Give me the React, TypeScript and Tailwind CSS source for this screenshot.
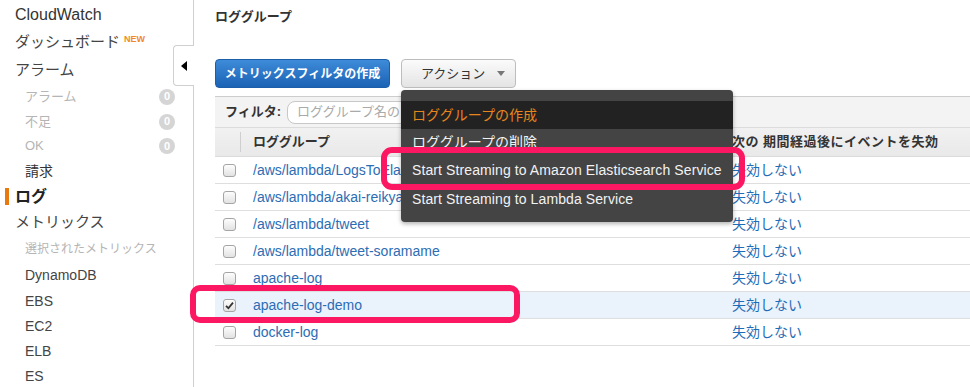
import React from 'react';

const logGroups = [
  '/aws/lambda/LogsToElasticsearch',
  '/aws/lambda/akai-reikyaku',
  '/aws/lambda/tweet',
  '/aws/lambda/tweet-soramame',
  'apache-log',
  'apache-log-demo',
  'docker-log',
];

function Badge() {
  return (
    <span className="w-[16px] h-[16px] rounded-full bg-[#d5d5d5] text-white text-[11px] font-bold flex items-center justify-center">
      0
    </span>
  );
}

function SubItem({ label, badge, h = 'h-[25px]' }: { label: string; badge?: boolean; h?: string }) {
  return (
    <div className={`${h} flex items-center justify-between pl-[25px] pr-[18px] text-[13px] text-[#b5b5b5]`}>
      <span>{label}</span>
      {badge && <Badge />}
    </div>
  );
}

function Checkbox({ checked = false }: { checked?: boolean }) {
  return (
    <span className="w-[13px] h-[13px] rounded-[3px] border border-[#a5a5a5] bg-gradient-to-b from-[#fdfdfd] to-[#e2e2e2] flex items-center justify-center">
      {checked && (
        <svg width="9" height="9" viewBox="0 0 9 9">
          <path d="M1 4.8 L3.4 7.2 L8 1.6" stroke="#333" strokeWidth="1.8" fill="none" />
        </svg>
      )}
    </span>
  );
}

function Sidebar() {
  return (
    <aside className="w-[194px] shrink-0 h-full border-r border-[#cfcfcf] relative text-[#444]">
      <div className="h-[29px] flex items-center pl-[15px] text-[16px] text-[#333]">CloudWatch</div>
      <div className="h-[27px] flex items-center pl-[15px] text-[15px]">
        ダッシュボード
        <span className="ml-[4px] -mt-[6px] text-[9px] font-bold text-[#f0892a]">NEW</span>
      </div>
      <div className="h-[28px] flex items-center pl-[15px] text-[15px]">アラーム</div>
      <SubItem label="アラーム" badge />
      <SubItem label="不足" badge />
      <SubItem label="OK" badge h="h-[24px]" />
      <div className="h-[26px] flex items-center pl-[25px] text-[14px] text-[#333]">請求</div>
      <div className="h-[25px] flex items-center pl-[15px] text-[16px] font-bold text-[#222] relative">
        <span className="absolute left-[5px] top-[4px] w-[4px] h-[17px] bg-[#e8790f]" />
        ログ
      </div>
      <div className="h-[26px] flex items-center pl-[15px] text-[15px]">メトリックス</div>
      <div className="h-[27px] flex items-center pl-[25px] text-[12px] text-[#b5b5b5]">選択されたメトリックス</div>
      {['DynamoDB', 'EBS', 'EC2', 'ELB', 'ES'].map((n, i) => (
        <div key={n} className={`${i === 0 ? 'h-[27px]' : 'h-[25px]'} flex items-center pl-[25px] text-[14px] text-[#444]`}>
          {n}
        </div>
      ))}

      {/* collapse tab */}
      <div className="absolute right-[-1px] top-[45px] w-[21px] h-[41px] bg-white border border-r-0 border-[#cfcfcf] rounded-l-[4px] flex items-center justify-center">
        <span className="w-0 h-0 border-y-[5px] border-y-transparent border-r-[6px] border-r-black" />
      </div>
    </aside>
  );
}

function ActionMenu() {
  return (
    <div className="absolute left-0 top-full mt-[2px] w-[332px] bg-[#444] rounded-[4px] pt-[11px] pb-[9px] shadow-[0_2px_4px_rgba(0,0,0,0.3)] z-10 text-[14px]">
      <div className="h-[28px] flex items-center px-[11px] bg-[#222] text-[#e8851c]">ロググループの作成</div>
      <div className="h-[27px] flex items-center px-[11px] text-[#f2f2f2]">ロググループの削除</div>
      <div className="h-[29px] flex items-center px-[11px] text-[#f2f2f2] tracking-[0.1px]">Start Streaming to Amazon Elasticsearch Service</div>
      <div className="h-[28px] flex items-center px-[11px] text-[#f2f2f2] tracking-[0.1px]">Start Streaming to Lambda Service</div>
    </div>
  );
}

export default function App() {
  return (
    <div className="w-[970px] h-[387px] overflow-hidden bg-white flex relative font-['Liberation_Sans','Noto_Sans_CJK_JP',sans-serif]">
      <Sidebar />

      <main className="flex-1 pl-[21px] min-w-0">
        <div className="h-[34px] flex items-center text-[13px] font-bold text-[#333]">ロググループ</div>

        <div className="mt-[25px] flex gap-[11px] h-[29px]">
          <button className="w-[175px] h-full rounded-[4px] border border-[#1d5ea8] bg-gradient-to-b from-[#3d8bd9] to-[#1b63b5] text-white text-[12px] font-bold">
            メトリックスフィルタの作成
          </button>
          <div className="relative">
            <button className="w-[115px] h-full rounded-[4px] border border-[#bdbdbd] bg-gradient-to-b from-[#fbfbfb] to-[#e4e4e4] text-[#333] text-[13px] flex items-center pl-[19px]">
              アクション
              <span className="ml-[12px] w-0 h-0 border-x-[4px] border-x-transparent border-t-[5px] border-t-[#777]" />
            </button>
            <ActionMenu />
          </div>
        </div>

        <div className="mt-[8px] h-[31px] bg-[#f3f3f3] border-t border-[#cdcdcd] flex items-center pl-[10px]">
          <span className="text-[13px] font-bold text-[#333]">フィルタ:</span>
          <div className="ml-[6px] w-[300px] h-[23px] rounded-[8px] border border-[#c8c8c8] bg-white flex items-center px-[9px] text-[13px] text-[#aaa]">
            ロググループ名のフィルタ
          </div>
        </div>

        <div className="h-[30px] bg-gradient-to-b from-[#f1f1f1] to-[#e9e9e9] border-t border-[#dcdcdc] border-b border-[#d0d0d0] flex items-center text-[13px] font-bold text-[#333]">
          <div className="w-[25px] h-full" />
          <div className="w-[480px] h-[20px] border-l border-[#cfcfcf] pl-[12px] flex items-center">ロググループ</div>
          <div className="flex-1 pl-[12px] whitespace-nowrap tracking-[0.5px]">次の 期間経過後にイベントを失効</div>
        </div>

        {logGroups.map((name) => {
          const selected = name === 'apache-log-demo';
          return (
            <div
              key={name}
              className={`h-[27px] flex items-center border-b border-[#dedede] text-[14px] ${selected ? 'bg-[#eaf2fc]' : ''}`}
            >
              <div className="w-[25px] flex justify-center pl-[3px]">
                <Checkbox checked={selected} />
              </div>
              <div className="w-[480px] pl-[13px] text-[#2d6db4] whitespace-nowrap overflow-hidden">{name}</div>
              <div className="flex-1 pl-[12px] text-[#1f6cb6]">失効しない</div>
            </div>
          );
        })}
      </main>

      {/* highlight annotations */}
      <div className="absolute left-[381px] top-[147px] w-[364px] h-[43px] border-[6px] border-[#fc1762] rounded-[11px] z-20" />
      <div className="absolute left-[190px] top-[285px] w-[330px] h-[38px] border-[6px] border-[#fc1762] rounded-[10px] z-20" />
    </div>
  );
}
